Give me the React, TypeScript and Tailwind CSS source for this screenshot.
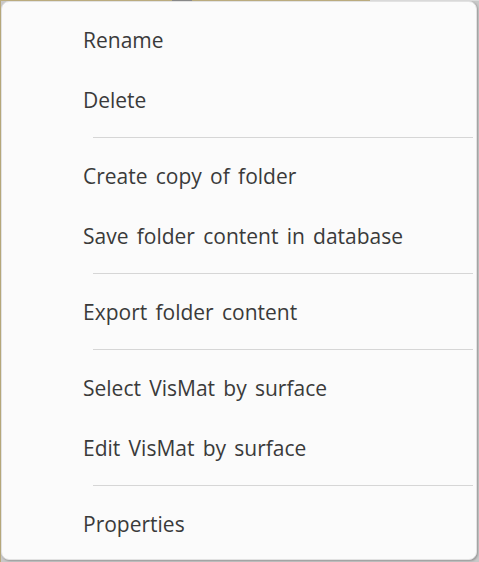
const groups: string[][] = [
  ["Rename", "Delete"],
  ["Create copy of folder", "Save folder content in database"],
  ["Export folder content"],
  ["Select VisMat by surface", "Edit VisMat by surface"],
  ["Properties"],
]

export default function App() {
  return (
    <div className="w-[479px] h-[562px] bg-[#c9c9c9] flex flex-col overflow-hidden">
      {/* desktop peeking out along the top edge */}
      <div className="h-px flex shrink-0">
        <div className="w-[172px] bg-[#bdae80]" />
        <div className="w-[20px] bg-[#8a8a8a]" />
        <div className="w-[178px] bg-[#bdae80]" />
        <div className="flex-1 bg-[#dcdcdc]" />
      </div>
      <div className="flex flex-1">
        <div className="w-px bg-[#b8a97c] shrink-0" />
        <div
          className="w-[476px] h-[559px] bg-[#fbfbfb] rounded-lg border border-[#e2e2e2] shadow-[1px_1px_2px_rgba(0,0,0,0.25)] pt-[9px] flex flex-col text-[#3a3a3a] text-[21px] [word-spacing:2.8px]"
          style={{ fontFamily: '"Segoe UI", "Open Sans", sans-serif' }}
        >
          {groups.map((group, gi) => (
            <div key={gi} className="flex flex-col">
              {gi > 0 && (
                <div className="h-4 pt-[6px] pl-[91px] pr-[3px]">
                  <div className="h-px bg-[#d6d6d6]" />
                </div>
              )}
              {group.map((label) => (
                <div key={label} className="h-[60px] flex items-center pl-[81px] pb-[2px] leading-none">
                  {label}
                </div>
              ))}
            </div>
          ))}
        </div>
      </div>
    </div>
  )
}
